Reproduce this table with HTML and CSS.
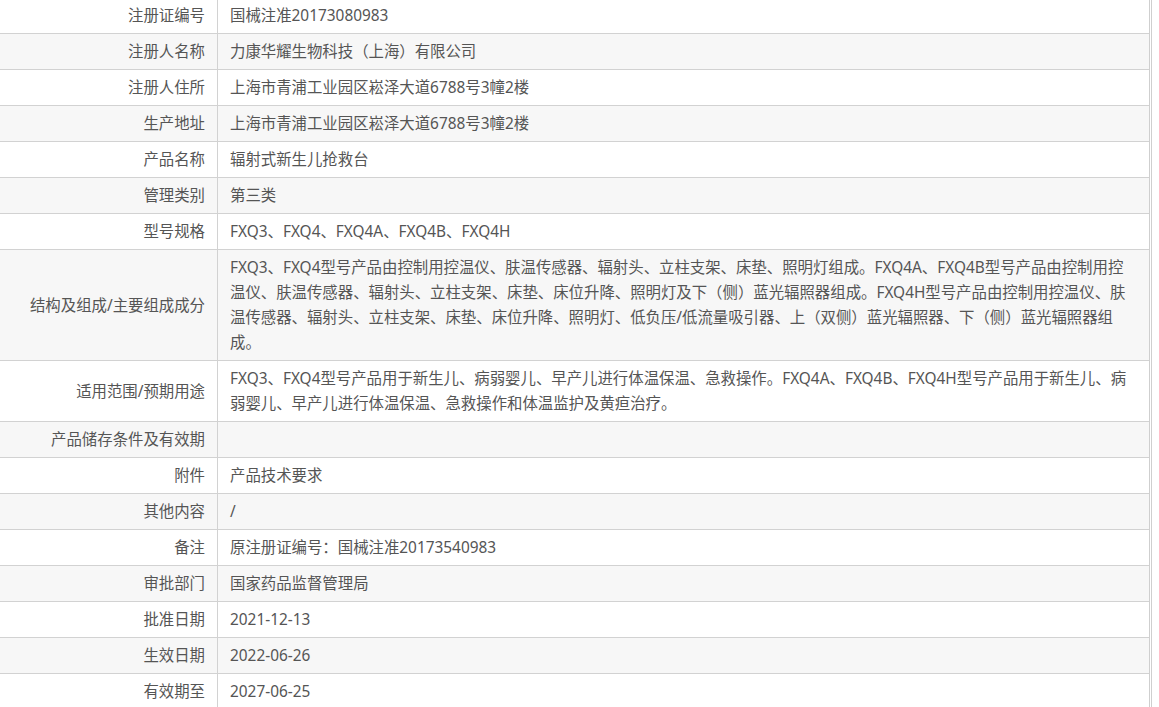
FILE: index.html
```html
<!DOCTYPE html>
<html lang="zh-CN">
<head>
<meta charset="utf-8">
<title>注册证信息</title>
<link rel="stylesheet" href="styles.css">
</head>
<body>
<div class="frame">
  <div class="sheet">
    <div class="row"><div class="label">注册证编号</div><div class="value">国械注准20173080983</div></div>
    <div class="row"><div class="label">注册人名称</div><div class="value">力康华耀生物科技（上海）有限公司</div></div>
    <div class="row"><div class="label">注册人住所</div><div class="value">上海市青浦工业园区崧泽大道6788号3幢2楼</div></div>
    <div class="row"><div class="label">生产地址</div><div class="value">上海市青浦工业园区崧泽大道6788号3幢2楼</div></div>
    <div class="row"><div class="label">产品名称</div><div class="value">辐射式新生儿抢救台</div></div>
    <div class="row"><div class="label">管理类别</div><div class="value">第三类</div></div>
    <div class="row"><div class="label">型号规格</div><div class="value">FXQ3、FXQ4、FXQ4A、FXQ4B、FXQ4H</div></div>
    <div class="row"><div class="label">结构及组成/主要组成成分</div><div class="value">FXQ3、FXQ4型号产品由控制用控温仪、肤温传感器、辐射头、立柱支架、床垫、照明灯组成。FXQ4A、FXQ4B型号产品由控制用控温仪、肤温传感器、辐射头、立柱支架、床垫、床位升降、照明灯及下（侧）蓝光辐照器组成。FXQ4H型号产品由控制用控温仪、肤温传感器、辐射头、立柱支架、床垫、床位升降、照明灯、低负压/低流量吸引器、上（双侧）蓝光辐照器、下（侧）蓝光辐照器组成。</div></div>
    <div class="row"><div class="label">适用范围/预期用途</div><div class="value">FXQ3、FXQ4型号产品用于新生儿、病弱婴儿、早产儿进行体温保温、急救操作。FXQ4A、FXQ4B、FXQ4H型号产品用于新生儿、病弱婴儿、早产儿进行体温保温、急救操作和体温监护及黄疸治疗。</div></div>
    <div class="row"><div class="label">产品储存条件及有效期</div><div class="value"></div></div>
    <div class="row"><div class="label">附件</div><div class="value">产品技术要求</div></div>
    <div class="row"><div class="label">其他内容</div><div class="value">/</div></div>
    <div class="row"><div class="label">备注</div><div class="value">原注册证编号：国械注准20173540983</div></div>
    <div class="row"><div class="label">审批部门</div><div class="value">国家药品监督管理局</div></div>
    <div class="row"><div class="label">批准日期</div><div class="value">2021-12-13</div></div>
    <div class="row"><div class="label">生效日期</div><div class="value">2022-06-26</div></div>
    <div class="row"><div class="label">有效期至</div><div class="value">2027-06-25</div></div>
  </div>
</div>
</body>
</html>
```

FILE: styles.css
```css
html, body {
  margin: 0;
  padding: 0;
  background: #ffffff;
}

body {
  font-family: "Noto Sans", "Noto Sans CJK SC", sans-serif;
  font-size: 15.4px;
  color: #555555;
}

.frame {
  width: 1151px;
  border-right: 1px solid #cfcfcf;
  margin-top: -2px;
}

.sheet {
  width: 1149px;
  border-right: 1px solid #cfcfcf;
}

.row {
  display: flex;
  border-bottom: 1px solid #d2d2d2;
  background: #ffffff;
}

.row:nth-child(even) {
  background: #f7f7f7;
}

.label {
  flex: 0 0 205px;
  display: flex;
  align-items: center;
  justify-content: flex-end;
  padding: 5px 12px 5px 0;
  border-right: 1px solid #d2d2d2;
  line-height: 25px;
  white-space: nowrap;
}

.value {
  flex: 1;
  min-height: 25px;
  padding: 5px 12px 5px 12px;
  line-height: 25px;
}
```
